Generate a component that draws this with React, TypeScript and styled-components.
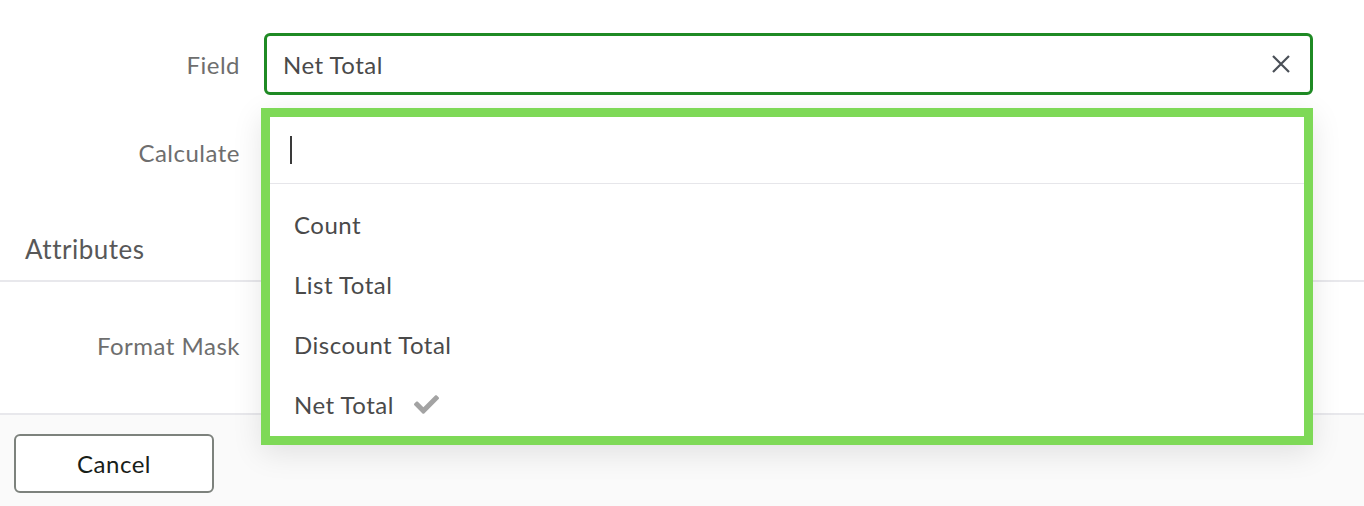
import React from "react";
import styled, { createGlobalStyle } from "styled-components";
import { FaCheck } from "react-icons/fa";

const Global = createGlobalStyle`
  html, body { margin: 0; padding: 0; background: #ffffff; }
  body { font-family: Lato, "Noto Sans", sans-serif; -webkit-font-smoothing: antialiased; }
  * { box-sizing: border-box; }
`;

const Page = styled.div`
  position: relative;
  width: 1364px;
  height: 506px;
  display: flex;
  flex-direction: column;
  background: #ffffff;
  overflow: hidden;
`;

const Section = styled.div<{ $pt: number; $pb: number; $gap?: number }>`
  flex-shrink: 0;
  display: flex;
  flex-direction: column;
  gap: ${(p) => p.$gap ?? 0}px;
  padding: ${(p) => p.$pt}px 51px ${(p) => p.$pb}px 0;
`;

const Row = styled.div`
  display: grid;
  grid-template-columns: 240px 1fr;
  column-gap: 24px;
  align-items: center;
  height: 62px;
`;

const Label = styled.div`
  text-align: right;
  font-size: 24px;
  letter-spacing: 0.5px;
  color: #6e6e6e;
`;

const Input = styled.div<{ $focused?: boolean }>`
  height: 62px;
  border: ${(p) => (p.$focused ? "3px solid #1f8a24" : "1px solid #d0d0d0")};
  border-radius: 6px;
  display: flex;
  align-items: center;
  justify-content: space-between;
  padding: 0 20px 0 16px;
  font-size: 24px;
  letter-spacing: 0.5px;
  color: #4a4a4a;
  background: #fff;
`;

const ClearIcon = styled.svg`
  width: 18px;
  height: 18px;
  display: block;
`;

const Heading = styled.div`
  flex-shrink: 0;
  height: 67px;
  display: flex;
  align-items: center;
  padding-left: 25px;
  padding-top: 2px;
  font-size: 26px;
  letter-spacing: 0.5px;
  color: #585858;
  border-bottom: 2px solid #e8e8ec;
`;

const Footer = styled.div`
  flex: 1;
  background: #fafafa;
  border-top: 2px solid #e8e8ec;
  padding: 19px 14px;
`;

const CancelButton = styled.button`
  width: 200px;
  height: 59px;
  border: 2px solid #7d827d;
  border-radius: 6px;
  background: #ffffff;
  font-family: Lato, "Noto Sans", sans-serif;
  font-size: 24px;
  letter-spacing: 0.5px;
  color: #182018;
`;

const Dropdown = styled.div`
  position: absolute;
  left: 261px;
  top: 108px;
  width: 1052px;
  height: 337px;
  border: 9px solid #7ed957;
  background: #ffffff;
  box-shadow: 0 8px 28px rgba(0, 0, 0, 0.1);
  display: flex;
  flex-direction: column;
`;

const Search = styled.div`
  height: 67px;
  border-bottom: 1px solid #e6e6ea;
  display: flex;
  align-items: center;
  padding-left: 20px;
`;

const Caret = styled.span`
  display: block;
  width: 2px;
  height: 28px;
  background: #3a3a3a;
`;

const List = styled.ul`
  list-style: none;
  margin: 0;
  padding: 10px 0 0;
`;

const Item = styled.li`
  height: 60px;
  display: flex;
  align-items: center;
  gap: 20px;
  padding-left: 24px;
  font-size: 24px;
  letter-spacing: 0.5px;
  color: #4a4a4a;
`;

const Check = styled(FaCheck)`
  color: #a3a3a3;
  width: 25px;
  height: 25px;
`;

const items = ["Count", "List Total", "Discount Total", "Net Total"];

export default function App() {
  return (
    <Page>
      <Global />
      <Section $pt={33} $pb={32} $gap={26}>
        <Row>
          <Label>Field</Label>
          <Input $focused>
            <span>Net Total</span>
            <ClearIcon viewBox="0 0 18 18">
              <path d="M1 1 L17 17 M17 1 L1 17" stroke="#4a4f57" strokeWidth="2.2" fill="none" />
            </ClearIcon>
          </Input>
        </Row>
        <Row>
          <Label>Calculate</Label>
          <Input />
        </Row>
      </Section>
      <Heading>Attributes</Heading>
      <Section $pt={32} $pb={37}>
        <Row>
          <Label>Format Mask</Label>
          <Input />
        </Row>
      </Section>
      <Footer>
        <CancelButton>Cancel</CancelButton>
      </Footer>
      <Dropdown>
        <Search>
          <Caret />
        </Search>
        <List>
          {items.map((it) => (
            <Item key={it}>
              {it}
              {it === "Net Total" && <Check />}
            </Item>
          ))}
        </List>
      </Dropdown>
    </Page>
  );
}
